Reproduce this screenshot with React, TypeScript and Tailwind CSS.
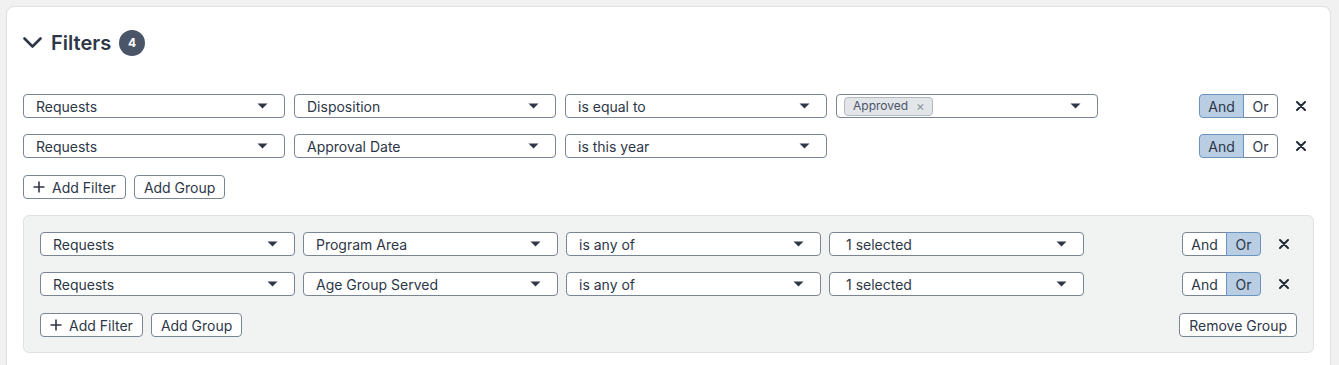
import React from "react";

type Row = {
  source: string;
  field: string;
  op: string;
  value?: string;
  chip?: string;
  join: "And" | "Or";
};

const topRows: Row[] = [
  { source: "Requests", field: "Disposition", op: "is equal to", chip: "Approved", join: "And" },
  { source: "Requests", field: "Approval Date", op: "is this year", join: "And" },
];

const groupRows: Row[] = [
  { source: "Requests", field: "Program Area", op: "is any of", value: "1 selected", join: "Or" },
  { source: "Requests", field: "Age Group Served", op: "is any of", value: "1 selected", join: "Or" },
];

function Caret() {
  return (
    <svg width="11" height="6" viewBox="0 0 11 6" className="shrink-0">
      <path d="M0.5 0.5 L10.5 0.5 L5.5 5.5 Z" fill="#2d3748" />
    </svg>
  );
}

function Select({ width, children }: { width: string; children?: React.ReactNode }) {
  return (
    <div
      className={`${width} flex h-[24px] shrink-0 items-center justify-between rounded-[4px] border border-[#7a8594] bg-white pl-[12px] pr-[16px] text-[14px] text-[#2d3748]`}
    >
      <div className="flex min-w-0 items-center">{children}</div>
      <Caret />
    </div>
  );
}

function Chip({ label }: { label: string }) {
  return (
    <span className="-ml-[5px] flex h-[19px] items-center gap-[8px] rounded-[4px] border border-[#b3b9c0] bg-[#e3e6e9] pl-[8px] pr-[7px] text-[12px] text-[#4a5568]">
      {label}
      <span className="text-[13px] leading-none text-[#8a939e]">×</span>
    </span>
  );
}

function Toggle({ join }: { join: "And" | "Or" }) {
  const on = "relative z-10 border-[#6b93bf] bg-[#b9cee3]";
  const off = "border-[#7a8594] bg-white";
  return (
    <div className="flex h-[24px] text-[14px] text-[#2d3748]">
      <div
        className={`flex w-[45px] items-center justify-center rounded-l-[4px] border ${join === "And" ? on : off}`}
      >
        And
      </div>
      <div
        className={`-ml-px flex w-[35px] items-center justify-center rounded-r-[4px] border ${join === "Or" ? on : off}`}
      >
        Or
      </div>
    </div>
  );
}

function CloseX() {
  return (
    <button className="ml-[12px] flex h-[22px] w-[22px] items-center justify-center">
      <svg width="10" height="10" viewBox="0 0 10 10">
        <path d="M1 1 L9 9 M9 1 L1 9" stroke="#1f2937" strokeWidth="2" strokeLinecap="round" />
      </svg>
    </button>
  );
}

function FilterRow({ row, w, gap }: { row: Row; w: string; gap: string }) {
  return (
    <div className="flex items-center justify-between pr-[2px]">
      <div className={`flex ${gap}`}>
        <Select width={w}>{row.source}</Select>
        <Select width={w}>{row.field}</Select>
        <Select width={w}>{row.op}</Select>
        {row.chip ? (
          <Select width={w}>
            <Chip label={row.chip} />
          </Select>
        ) : row.value ? (
          <Select width={w}>
            <span className="pl-[4px]">{row.value}</span>
          </Select>
        ) : null}
      </div>
      <div className="flex items-center">
        <Toggle join={row.join} />
        <CloseX />
      </div>
    </div>
  );
}

function SmallButton({ children }: { children: React.ReactNode }) {
  return (
    <button className="flex h-[24px] items-center gap-[7px] rounded-[4px] border border-[#7a8594] bg-white px-[9px] text-[14px] text-[#2d3748]">
      {children}
    </button>
  );
}

function Plus() {
  return (
    <svg width="12" height="12" viewBox="0 0 12 12">
      <path d="M6 0.5 V11.5 M0.5 6 H11.5" stroke="#2d3748" strokeWidth="1.6" />
    </svg>
  );
}

export default function App() {
  return (
    <div className="h-[365px] overflow-hidden bg-[#f1f1f1] pl-[6px] pr-[8px] pt-[6px] font-['Inter',sans-serif]">
      <div className="h-[359px] rounded-t-[8px] border border-b-0 border-[#e1e1e1] bg-white px-[16px]">
        <div className="flex h-[70px] items-center pt-[1px]">
          <svg width="19" height="11" viewBox="0 0 19 11" className="mr-[9px]">
            <path
              d="M1.5 1.5 L9.5 9.5 L17.5 1.5"
              fill="none"
              stroke="#2d3748"
              strokeWidth="2.6"
              strokeLinecap="round"
              strokeLinejoin="round"
            />
          </svg>
          <h2 className="text-[20px] font-semibold text-[#2d3748]">Filters</h2>
          <span className="ml-[8px] flex h-[26px] w-[26px] items-center justify-center rounded-full bg-[#4a5568] text-[12px] font-bold text-white">
            4
          </span>
        </div>

        <div className="mt-[17px] flex flex-col gap-[16px]">
          {topRows.map((r) => (
            <FilterRow key={r.field} row={r} w="w-[262px]" gap="gap-[9px]" />
          ))}
        </div>

        <div className="mt-[17px] flex gap-[8px]">
          <SmallButton>
            <Plus />
            Add Filter
          </SmallButton>
          <SmallButton>Add Group</SmallButton>
        </div>

        <div className="mt-[16px] rounded-[6px] border border-[#dfe2e2] bg-[#f1f2f2] px-[16px] pb-[15px] pt-[16px]">
          <div className="flex flex-col gap-[16px]">
            {groupRows.map((r) => (
              <FilterRow key={r.field} row={r} w="w-[255px]" gap="gap-[8px]" />
            ))}
          </div>
          <div className="mt-[17px] flex items-center justify-between">
            <div className="flex gap-[8px]">
              <SmallButton>
                <Plus />
                Add Filter
              </SmallButton>
              <SmallButton>Add Group</SmallButton>
            </div>
            <SmallButton>Remove Group</SmallButton>
          </div>
        </div>
      </div>
    </div>
  );
}
